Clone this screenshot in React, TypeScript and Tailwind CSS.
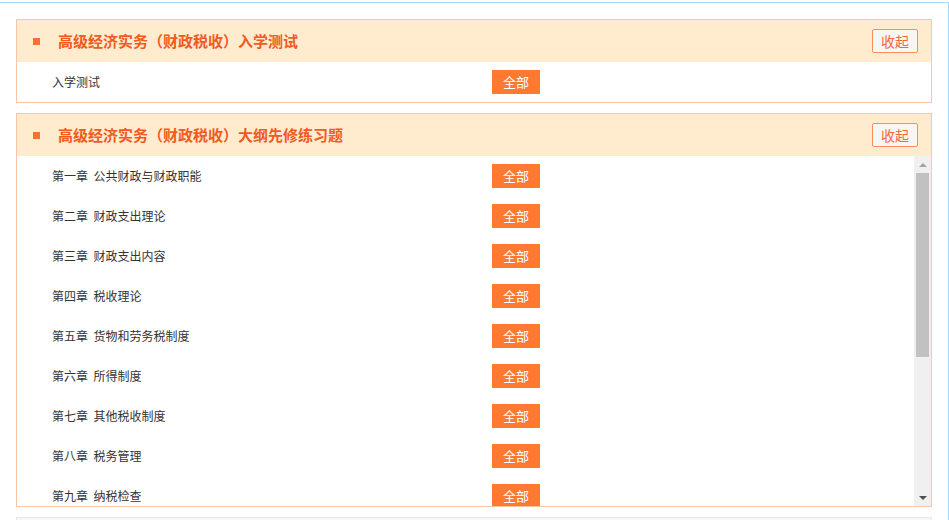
import React from 'react';

const intro = ['入学测试'];

// only the chapters that fit in the visible part of the list
const chapters = [
  '第一章  公共财政与财政职能',
  '第二章  财政支出理论',
  '第三章  财政支出内容',
  '第四章  税收理论',
  '第五章  货物和劳务税制度',
  '第六章  所得制度',
  '第七章  其他税收制度',
  '第八章  税务管理',
  '第九章  纳税检查',
];

function Row({ name }: { name: string }) {
  return (
    <div className="h-10 flex items-center pl-[35px] shrink-0">
      <span className="w-[440px] text-[12px] text-[#333] whitespace-pre">{name}</span>
      <button className="w-12 h-6 bg-[#ff7a30] text-white text-[13px] leading-6">全部</button>
    </div>
  );
}

function Header({ title }: { title: string }) {
  return (
    <div className="h-[42px] bg-[#ffebcd] flex items-center pl-4 pr-[13px]">
      <span className="w-[7px] h-[7px] bg-[#f6703a]"></span>
      <h2 className="ml-[18px] text-[15px] font-bold text-[#f25a1f] flex-1">{title}</h2>
      <button className="w-[46px] h-6 border border-[#ff8c60] rounded-[2px] bg-[#f8f6f1] text-[14px] text-[#f4683a] leading-[22px]">
        收起
      </button>
    </div>
  );
}

export default function App() {
  return (
    <div
      className="w-[949px] h-[520px] overflow-hidden bg-white pt-[2px]"
      style={{ fontFamily: '"Noto Sans CJK SC", "Noto Sans", sans-serif' }}
    >
      <div className="h-full border-t border-r border-[#a9d9f8] px-4 pt-4">
        <div className="border border-[#fbc6a3]">
          <Header title="高级经济实务（财政税收）入学测试" />
          {intro.map((n) => (
            <Row key={n} name={n} />
          ))}
        </div>

        <div className="mt-[10px] border border-[#fbc6a3]">
          <Header title="高级经济实务（财政税收）大纲先修练习题" />
          <div className="h-[350px] flex">
            <div className="flex-1 flex flex-col overflow-hidden">
              {chapters.map((n) => (
                <Row key={n} name={n} />
              ))}
            </div>
            <div className="w-[17px] bg-[#f0f0f0] flex flex-col items-center">
              <div className="h-[17px] flex items-center justify-center">
                <svg width="8" height="4" viewBox="0 0 8 4">
                  <path d="M0 4 L4 0 L8 4 Z" fill="#a3a3a3" />
                </svg>
              </div>
              <div className="w-[13px] h-[184px] bg-[#c1c1c1]"></div>
              <div className="flex-1"></div>
              <div className="h-[17px] flex items-center justify-center">
                <svg width="8" height="4" viewBox="0 0 8 4">
                  <path d="M0 0 L8 0 L4 4 Z" fill="#505050" />
                </svg>
              </div>
            </div>
          </div>
        </div>

        <div className="mt-[10px] border border-[#e8e8e8] bg-[#f7f7f7] h-10"></div>
      </div>
    </div>
  );
}
